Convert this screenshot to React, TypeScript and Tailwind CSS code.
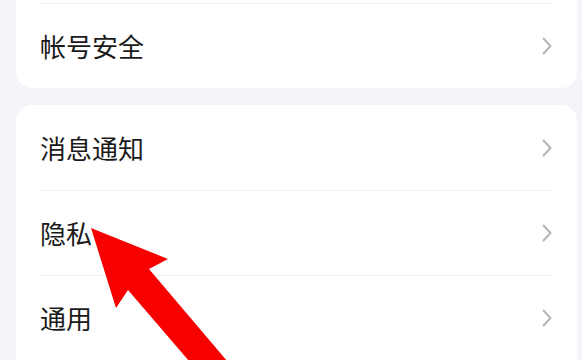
import React from "react";

const Chevron = () => (
  <svg width="12" height="18" viewBox="0 0 12 18" fill="none">
    <path d="M2.5 1.5 L9.5 9 L2.5 16.5" stroke="#b5b5b5" strokeWidth="2" strokeLinecap="round" strokeLinejoin="round" />
  </svg>
);

const Row = ({ label, divider }: { label: string; divider?: boolean }) => (
  <div className={`flex h-[85px] items-center justify-between ${divider ? "border-t border-[#efeff1]" : ""}`}>
    <span className="text-[26px] leading-none text-[#1a1a1a]" style={{ fontFamily: '"Noto Sans CJK SC", "Noto Sans", sans-serif' }}>
      {label}
    </span>
    <Chevron />
  </div>
);

export default function App() {
  return (
    <div className="relative h-[360px] w-[582px] overflow-hidden bg-[#f4f5f9]">
      <div className="flex flex-col gap-[17px]">
        <div className="ml-4 w-[561px] rounded-b-[16px] bg-white px-6">
          <div className="h-[3px]" />
          <Row label="帐号安全" divider />
        </div>
        <div className="ml-4 w-[561px] rounded-[16px] bg-white px-6 pb-6">
          <Row label="消息通知" />
          <Row label="隐私" divider />
          <Row label="通用" divider />
        </div>
      </div>
      <svg className="absolute left-0 top-0" width="582" height="360" viewBox="0 0 582 360">
        <polygon points="91,228 168,259 149,269 233,368 195,368 128,290 116,308" fill="#f70000" />
      </svg>
    </div>
  );
}
